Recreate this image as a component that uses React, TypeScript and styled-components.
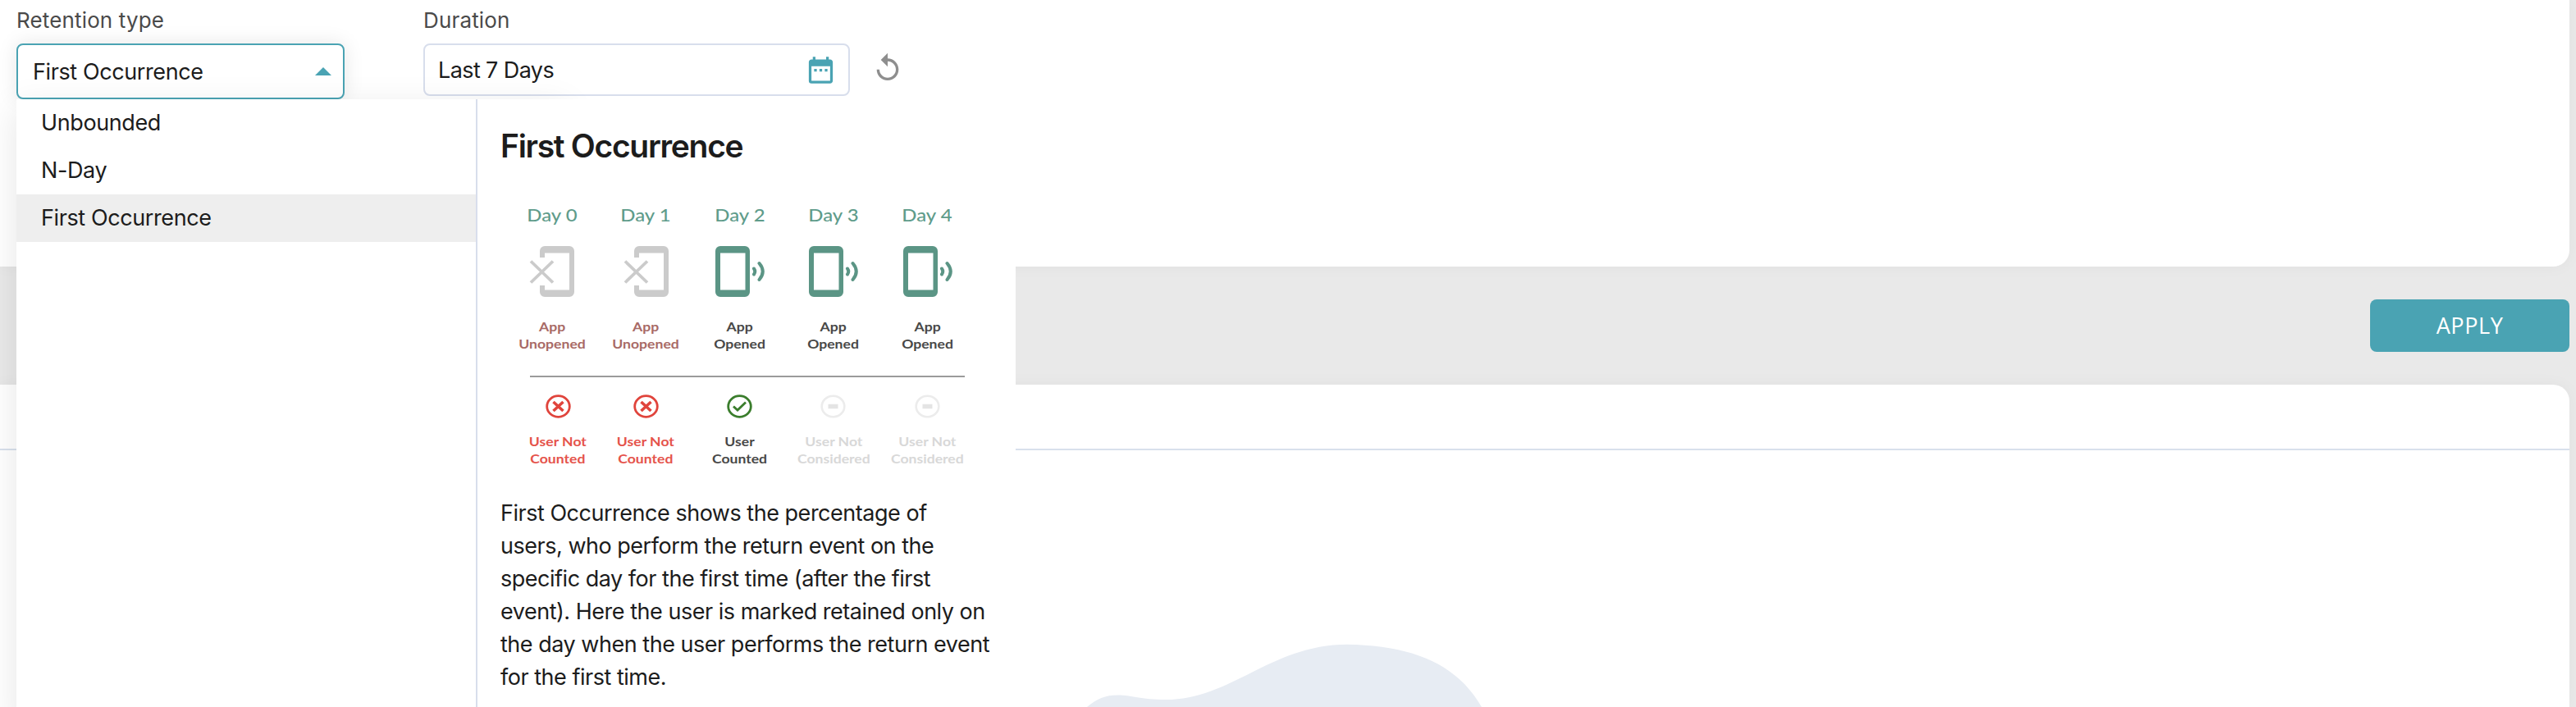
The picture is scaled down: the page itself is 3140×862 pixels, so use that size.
import React from 'react'
import styled, { createGlobalStyle } from 'styled-components';
import { MdDateRange, MdReplay } from 'react-icons/md';

const GlobalStyle = createGlobalStyle`
    * {
        box-sizing: border-box;
    }
    body {
        margin: 0;
        background: #e9e9e9;
        color: #1c1c1c;
        font-family: Inter, "Liberation Sans", sans-serif;
        font-size: 27px;
    }
    h2, p {
        margin: 0;
    }
`;

const Page = styled.div`
    display: flex;
    flex-direction: column;
    height: 862px;
    padding-right: 8px;
    overflow: hidden;
`;

const FilterCard = styled.section`
    display: flex;
    align-items: flex-start;
    height: 325px;
    padding: 6px 0 0 20px;
    background: #fff;
    border-bottom-right-radius: 20px;
    box-shadow: 0 0 20px rgba(0, 0, 0, .04);
`;

const Field = styled.div<{ $width: number; $gap: number }>`
    position: relative;
    width: ${(p) => p.$width}px;
    margin-right: ${(p) => p.$gap}px;
`;

const Label = styled.label`
    display: block;
    height: 47px;
    line-height: 38px;
    font-size: 26px;
    letter-spacing: .15px;
    color: #4a4a4a;
`;

const SelectBox = styled.div`
    display: flex;
    align-items: center;
    justify-content: space-between;
    height: 68px;
    padding: 0 14px 0 18px;
    border: 2px solid #4aa3b3;
    border-radius: 8px;
    background: #fff;
    letter-spacing: -.4px;
    box-shadow: 0 0 24px rgba(0, 0, 0, .1);
`;

const Caret = styled.span`
    border: 10px solid transparent;
    border-top: 0;
    border-bottom-color: #4aa3b3;
`;

const DateBox = styled.div`
    display: flex;
    align-items: center;
    justify-content: space-between;
    height: 64px;
    padding: 0 14px 0 16px;
    border: 2px solid #d8deec;
    border-radius: 8px;
    letter-spacing: -.6px;

    svg {
        color: #4aa3b3;
    }
`;

const ResetButton = styled.button`
    display: flex;
    margin-top: 57px;
    padding: 0;
    border: 0;
    background: none;
    color: #8e8e8e;
`;

const Dropdown = styled.div`
    position: absolute;
    top: 115px;
    left: 0;
    z-index: 2;
    display: flex;
    width: 1218px;
    height: 760px;
`;

const DropdownShadow = styled.div`
    position: absolute;
    inset: 0 auto 0 0;
    width: 670px;
    box-shadow: 0 10px 40px rgba(0, 0, 0, .1);
`;

const OptionList = styled.div`
    position: relative;
    width: 562px;
    background: #fff;
    border-right: 2px solid #d8deec;
`;

const Option = styled.div<{ $selected?: boolean }>`
    height: 58px;
    padding-left: 30px;
    line-height: 58px;
    letter-spacing: -.4px;
    background: ${(p) => (p.$selected ? '#eee' : '#fff')};
`;

const Details = styled.div`
    position: relative;
    flex: 1;
    padding: 29px 0 0 28px;
    background: #fff;
`;

const Title = styled.h2`
    line-height: 56px;
    font-size: 39px;
    font-weight: 600;
    letter-spacing: -1.3px;
`;

const Description = styled.p`
    line-height: 40px;
    letter-spacing: -.48px;
    white-space: nowrap;
`;

const Figure = styled.div`
    width: 572px;
    height: 400px;
    margin-left: 5.5px;
    padding-top: 38px;
    font-family: Lato, "Open Sans", sans-serif;
`;

const DayRow = styled.div`
    display: grid;
    grid-template-columns: repeat(5, 1fr);
    justify-items: center;
`;

const DayCell = styled.div<{ $shift?: number }>`
    display: flex;
    flex-direction: column;
    align-items: center;
    margin-left: ${(p) => p.$shift || 0}px;
`;

const DayName = styled.span`
    line-height: 36px;
    font-size: 21px;
    font-weight: 500;
    color: #5f9c8b;
    transform: scaleX(1.14);
`;

const PhoneIcon = styled.svg`
    margin: 20px 0 25px 3px;
`;

const Status = styled.span<{ $color: string }>`
    line-height: 21px;
    font-size: 16px;
    font-weight: 700;
    text-align: center;
    white-space: pre-line;
    color: ${(p) => p.$color};
    transform: scaleX(1.1);
`;

const Divider = styled.div`
    width: 530px;
    height: 2px;
    margin: 29px 0 21px 30px;
    background: #9b9b9b;
`;

const ResultIcon = styled.svg`
    margin-bottom: 17px;
`;

const ActionBar = styled.div`
    display: flex;
    justify-content: flex-end;
    align-items: center;
    height: 144px;
`;

const ApplyButton = styled.button`
    width: 243px;
    height: 64px;
    padding: 0 0 1px;
    border: 0;
    border-radius: 8px;
    background: #4aa3b3;
    color: #fff;
    font-family: "Open Sans", sans-serif;
    font-size: 27px;
    letter-spacing: .6px;
`;

const ResultCard = styled.section`
    flex: 1;
    background: #fff;
    border-top-right-radius: 20px;
    box-shadow: 0 0 20px rgba(0, 0, 0, .04);
`;

const ResultHeader = styled.div`
    height: 80px;
    border-bottom: 2px solid #d8e0ec;
`;

const EmptyShape = styled.svg`
    display: block;
    margin: 231px 0 0 1320px;
`;

const options = ['Unbounded', 'N-Day', 'First Occurrence'];

const days = [
  { name: 'Day 0', opened: false },
  { name: 'Day 1', opened: false },
  { name: 'Day 2', opened: true },
  { name: 'Day 3', opened: true },
  { name: 'Day 4', opened: true },
];

const results = [
  { kind: 'no', text: 'User Not\nCounted', color: '#e5534b', shift: 15 },
  { kind: 'no', text: 'User Not\nCounted', color: '#e5534b' },
  { kind: 'yes', text: 'User\nCounted', color: '#484848' },
  { kind: 'none', text: 'User Not\nConsidered', color: '#d8d8d8' },
  { kind: 'none', text: 'User Not\nConsidered', color: '#d8d8d8' },
];

const Phone = ({ opened }: { opened: boolean }) => (
  <PhoneIcon width='62' height='62' viewBox='0 0 62 62' fill='none'>
    {opened ? (
      <>
        <path fillRule='evenodd' fill='#5b9585' d='M6 0h30a6 6 0 0 1 6 6v50a6 6 0 0 1-6 6H6a6 6 0 0 1-6-6V6a6 6 0 0 1 6-6zM6 8.500v45h30.500v-45z' />
        <path stroke='#5b9585' strokeWidth='4' strokeLinecap='round' d='M47 27.500q2.500 3.500 0 7M53.500 21q8.500 10 0 20' />
      </>
    ) : (
      <>
        <path fill='#cbcbcb' d='M15 14V6a6 6 0 0 1 6-6h30a6 6 0 0 1 6 6v50a6 6 0 0 1-6 6H21a6 6 0 0 1-6-6v-8h6v5.500h30v-45H21V14z' />
        <path stroke='#cbcbcb' strokeWidth='3.800' d='M4 18.500l27 26M31 18.500l-27 26' />
      </>
    )}
  </PhoneIcon>
);

const Result = ({ kind }: { kind: string }) => (
  <ResultIcon width='31' height='29' viewBox='0 0 31 29' fill='none'>
    {kind === 'no' && (
      <g stroke='#e0443c' strokeWidth='2.800'>
        <ellipse cx='15.500' cy='14.500' rx='13.800' ry='12.800' />
        <path strokeWidth='3.600' d='M9.500 9l12 11M21.500 9l-12 11' />
      </g>
    )}
    {kind === 'yes' && (
      <g stroke='#3a7d2c' strokeWidth='2.800'>
        <ellipse cx='15.500' cy='14.500' rx='13.800' ry='12.800' />
        <path d='M8 14.500l5 4.500 10-9.500' />
      </g>
    )}
    {kind === 'none' && (
      <g stroke='#ececec' strokeWidth='2.600'>
        <ellipse cx='15.500' cy='14.500' rx='13.800' ry='12.800' />
        <path strokeWidth='5.500' stroke='#e4e4e4' d='M9.500 14.500h12' />
      </g>
    )}
  </ResultIcon>
);

const App = () => {
  return (
    <Page>
      <GlobalStyle />
      <FilterCard>
        <Field $width={400} $gap={96}>
          <Label>Retention type</Label>
          <SelectBox>
            First Occurrence
            <Caret />
          </SelectBox>
          <Dropdown>
            <DropdownShadow />
            <OptionList>
              {options.map((option) => (
                <Option key={option} $selected={option === 'First Occurrence'}>{option}</Option>
              ))}
            </OptionList>
            <Details>
              <Title>First Occurrence</Title>
              <Figure>
                <DayRow>
                  {days.map((day) => (
                    <DayCell key={day.name}>
                      <DayName>{day.name}</DayName>
                      <Phone opened={day.opened} />
                      <Status $color={day.opened ? '#484848' : '#a86a66'}>
                        {day.opened ? 'App\nOpened' : 'App\nUnopened'}
                      </Status>
                    </DayCell>
                  ))}
                </DayRow>
                <Divider />
                <DayRow>
                  {results.map((result, i) => (
                    <DayCell key={i} $shift={result.shift}>
                      <Result kind={result.kind} />
                      <Status $color={result.color}>{result.text}</Status>
                    </DayCell>
                  ))}
                </DayRow>
              </Figure>
              <Description>
                First Occurrence shows the percentage of<br />
                users, who perform the return event on the<br />
                specific day for the first time (after the first<br />
                event). Here the user is marked retained only on<br />
                the day when the user performs the return event<br />
                for the first time.
              </Description>
            </Details>
          </Dropdown>
        </Field>
        <Field $width={520} $gap={26}>
          <Label>Duration</Label>
          <DateBox>
            Last 7 Days
            <MdDateRange size={39} />
          </DateBox>
        </Field>
        <ResetButton>
          <MdReplay size={40} />
        </ResetButton>
      </FilterCard>
      <ActionBar>
        <ApplyButton>APPLY</ApplyButton>
      </ActionBar>
      <ResultCard>
        <ResultHeader />
        <EmptyShape width='500' height='82' viewBox='1320 780 500 82'>
          <path fill='#e7ecf3' d='M1325 862C1337 852 1347 847.500 1363 847.500C1378 847.500 1391 853 1421 853C1500 853 1550 785.700 1642 785.700C1720 787 1775 808 1806 862z' />
        </EmptyShape>
      </ResultCard>
    </Page>
  )
}

export default App
